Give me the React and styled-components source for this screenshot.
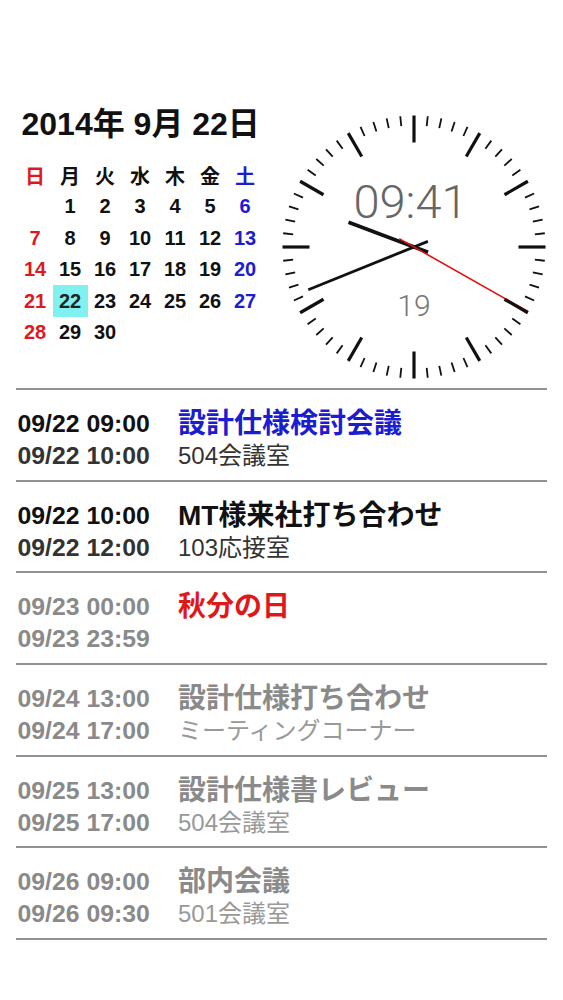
import styled, { createGlobalStyle } from "styled-components";

const GlobalStyle = createGlobalStyle`
  body {
    margin: 0;
    background: #ffffff;
    font-family: "Liberation Sans", "Noto Sans CJK JP", sans-serif;
  }
`;

const RED = "#e0181c";
const BLUE = "#1c1cd0";

// 2014年9月: 1日は月曜日
const days = [null, ...Array.from({ length: 30 }, (_, i) => i + 1)];
const weekdays = ["日", "月", "火", "水", "木", "金", "土"];

const events = [
  { start: "09/22 09:00", end: "09/22 10:00", title: "設計仕様検討会議", place: "504会議室", titleColor: BLUE, past: false },
  { start: "09/22 10:00", end: "09/22 12:00", title: "MT様来社打ち合わせ", place: "103応接室", titleColor: "#111", past: false },
  { start: "09/23 00:00", end: "09/23 23:59", title: "秋分の日", place: "", titleColor: RED, past: true },
  { start: "09/24 13:00", end: "09/24 17:00", title: "設計仕様打ち合わせ", place: "ミーティングコーナー", titleColor: "#8a8a8a", past: true },
  { start: "09/25 13:00", end: "09/25 17:00", title: "設計仕様書レビュー", place: "504会議室", titleColor: "#8a8a8a", past: true },
  { start: "09/26 09:00", end: "09/26 09:30", title: "部内会議", place: "501会議室", titleColor: "#8a8a8a", past: true },
];

const dayColor = (col) => (col === 0 ? RED : col === 6 ? BLUE : "#111");

const SIZE = 270;
const C = SIZE / 2;
const R = 131.5;

const pt = (deg, r) => {
  const a = (deg * Math.PI) / 180;
  return [C + r * Math.sin(a), C - r * Math.cos(a)];
};

const Hand = ({ angle, length, tail, width, color }) => {
  const [x1, y1] = pt(angle + 180, tail);
  const [x2, y2] = pt(angle, length);
  return <line x1={x1} y1={y1} x2={x2} y2={y2} stroke={color} strokeWidth={width} />;
};

const Clock = () => {
  const ticks = Array.from({ length: 60 }, (_, i) => {
    const hour = i % 5 === 0;
    const [x1, y1] = pt(i * 6, R - (hour ? 27 : 10));
    const [x2, y2] = pt(i * 6, R);
    return (
      <line key={i} x1={x1} y1={y1} x2={x2} y2={y2} stroke="#111" strokeWidth={hour ? 3.2 : 1.8} />
    );
  });
  return (
    <ClockFace width={SIZE} height={SIZE} viewBox={`0 0 ${SIZE} ${SIZE}`}>
      <DigitalTime x={C - 3.5} y={105.5} textAnchor="middle">09:41</DigitalTime>
      <Seconds x={C} y={203.5} textAnchor="middle">19</Seconds>
      <Hand angle={290.67} length={70} tail={15} width={3.6} color="#111" />
      <Hand angle={248} length={114} tail={15} width={2.8} color="#111" />
      <Hand angle={119.5} length={131} tail={17} width={1.6} color="#e01010" />
      {ticks}
    </ClockFace>
  );
};

const App = () => {
  return (
    <Page>
      <GlobalStyle />
      <Top>
        <CalendarColumn>
          <DateTitle>2014年 9月 22日</DateTitle>
          <CalGrid>
            {weekdays.map((w, i) => (
              <Cell key={w} color={dayColor(i)}>{w}</Cell>
            ))}
            {days.map((d, i) => (
              <Cell key={i} color={dayColor(i % 7)} today={d === 22}>
                {d}
              </Cell>
            ))}
          </CalGrid>
        </CalendarColumn>
        <ClockWrap>
          <Clock />
        </ClockWrap>
      </Top>
      <EventList>
        {events.map((e) => (
          <EventRow key={e.start}>
            <Time color={e.past ? "#8a8a8a" : "#111"}>{e.start}</Time>
            <Title color={e.titleColor}>{e.title}</Title>
            <Time color={e.past ? "#8a8a8a" : "#333"}>{e.end}</Time>
            <Place color={e.past ? "#999" : "#333"}>{e.place}</Place>
          </EventRow>
        ))}
      </EventList>
    </Page>
  );
};

const Page = styled.div`
  padding-top: 106px;
  width: 563px;
`;

const Top = styled.div`
  display: flex;
  height: 282px;
  padding-left: 17.5px;
`;

const CalendarColumn = styled.div`
  width: 245px;
  display: flex;
  flex-direction: column;
`;

const DateTitle = styled.div`
  font-size: 32px;
  font-weight: bold;
  line-height: 36px;
  height: 36px;
  padding-left: 4px;
  margin-bottom: 17.25px;
  color: #111;
  white-space: nowrap;
`;

const CalGrid = styled.div`
  display: grid;
  grid-template-columns: repeat(7, 35px);
  grid-auto-rows: 31.5px;
`;

const Cell = styled.div`
  display: flex;
  align-items: center;
  justify-content: center;
  font-size: 20px;
  font-weight: bold;
  color: ${(p) => (p.today ? "#1a2626" : p.color)};
  background: ${(p) => (p.today ? "#80f0f0" : "transparent")};
`;

const ClockWrap = styled.div`
  margin-left: 16px;
  margin-top: 5.5px;
`;

const ClockFace = styled.svg`
  display: block;
`;

const DigitalTime = styled.text`
  font-family: Roboto, "Liberation Sans", sans-serif;
  font-weight: 300;
  font-size: 47px;
  fill: #666;
`;

const Seconds = styled.text`
  font-family: Roboto, "Liberation Sans", sans-serif;
  font-weight: 300;
  font-size: 30px;
  fill: #777;
`;

const EventList = styled.div`
  margin: 0 16px;
  border-bottom: 2px solid #919191;
`;

const EventRow = styled.div`
  box-sizing: border-box;
  height: 91.67px;
  border-top: 2px solid #919191;
  padding: 18px 0 0 1.5px;
  display: grid;
  grid-template-columns: 160.5px 1fr;
  grid-template-rows: 32px 32px;
  align-items: center;
`;

const Time = styled.div`
  font-size: 24.8px;
  font-weight: bold;
  line-height: 32px;
  color: ${(p) => p.color};
  white-space: nowrap;
`;

const Title = styled.div`
  font-size: 28px;
  font-weight: bold;
  line-height: 32px;
  color: ${(p) => p.color};
  white-space: nowrap;
`;

const Place = styled.div`
  font-size: 24px;
  line-height: 32px;
  color: ${(p) => p.color};
  white-space: nowrap;
`;

export default App;
